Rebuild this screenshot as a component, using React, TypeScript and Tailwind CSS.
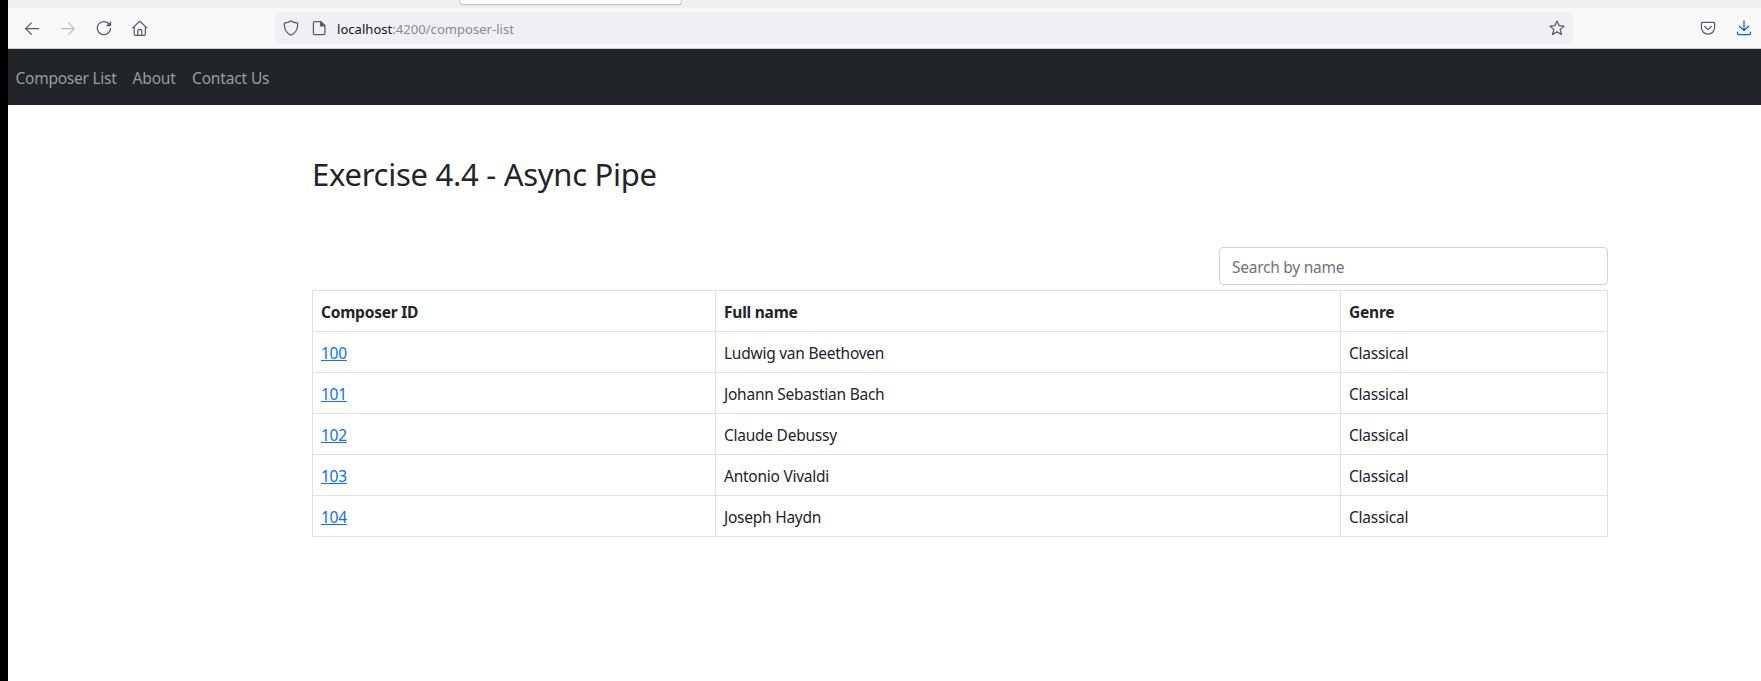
import type { ReactNode } from "react";

const composers = [
  { id: 100, name: "Ludwig van Beethoven", genre: "Classical" },
  { id: 101, name: "Johann Sebastian Bach", genre: "Classical" },
  { id: 102, name: "Claude Debussy", genre: "Classical" },
  { id: 103, name: "Antonio Vivaldi", genre: "Classical" },
  { id: 104, name: "Joseph Haydn", genre: "Classical" },
];

function Icon({ children, className = "text-[#5b5b66]" }: { children: ReactNode; className?: string }) {
  return (
    <svg
      viewBox="0 0 16 16"
      className={`size-4 shrink-0 ${className}`}
      fill="none"
      stroke="currentColor"
      strokeWidth="1.25"
      strokeLinecap="round"
      strokeLinejoin="round"
    >
      {children}
    </svg>
  );
}

function ToolButton({ label, children }: { label: string; children: ReactNode }) {
  return (
    <button aria-label={label} className="flex h-8 w-9 shrink-0 items-center justify-center">
      {children}
    </button>
  );
}

function BrowserToolbar() {
  return (
    <div className="flex h-[41px] items-center border-b border-[#cccdd0] bg-[#f9f9fb] pl-1.5">
      <ToolButton label="Back">
        <Icon>
          <path d="M14.6 8.6H1.6M7.3 2.9 1.6 8.6l5.7 5.7" />
        </Icon>
      </ToolButton>
      <ToolButton label="Forward">
        <Icon className="text-[#bdbdc2]">
          <path d="M1.4 8.6h13M8.7 2.9l5.7 5.7-5.7 5.7" />
        </Icon>
      </ToolButton>
      <ToolButton label="Reload">
        <Icon>
          <path d="M13.3 4.3A6.6 6.6 0 1 0 14.5 8.4" />
          <path d="M14.9 1.4v4.600h-4.600z" fill="currentColor" strokeWidth="0.4" />
        </Icon>
      </ToolButton>
      <ToolButton label="Home">
        <Icon>
          <path d="M.8 7.9 7.1 1.8a1 1 0 0 1 1.4 0l6.3 6.1M2.2 6.8v7.1c0 .8.5 1.4 1.3 1.4h8.6c.8 0 1.3-.6 1.3-1.4V6.8" />
          <path d="M5.8 15.1v-4.2c0-.7.5-1.2 1.2-1.2h1.6c.7 0 1.2.5 1.2 1.2v4.2" />
        </Icon>
      </ToolButton>

      <div className="ml-[117px] flex h-8 w-[1298px] shrink-0 items-center rounded bg-[#f0eff4] pr-2 pl-2">
        <Icon>
          <path d="M8 .8C6.3 2.2 3.6 3 1.3 3.2c-.2 5.2 1.3 9.6 6.700 12 5.400-2.400 6.900-6.800 6.700-12C12.400 3 9.700 2.200 8 .8Z" />
        </Icon>
        <Icon className="ml-3 text-[#5b5b66]">
          <path d="M3.800 1.600h6l4.100 4.100v7.500c0 .8-.6 1.400-1.400 1.400H3.800c-.8 0-1.400-.6-1.400-1.400V3c0-.8.6-1.400 1.400-1.400Z" />
          <path d="M9.600 1.700v4.100h4.200z" fill="currentColor" />
        </Icon>
        <div className="ml-2.5 grow pt-px text-[13px] leading-5 tracking-[0.04px] text-[#8a8a90]">
          <span className="text-[#15141a]">localhost</span>:4200/composer-list
        </div>
        <Icon>
          <path d="m8 1.100 2 4.500 5 .5-3.800 3.300 1.200 5.100L8 11.900l-4.400 2.600 1.200-5.100L1 6.100l5-.5z" />
        </Icon>
      </div>

      <div className="ml-auto flex">
        <ToolButton label="Save to Pocket">
          <Icon>
            <path d="M2.600 2.400h10.800c.7 0 1.200.5 1.200 1.200v4A6.600 6.600 0 0 1 1.400 7.600v-4c0-.7.5-1.200 1.200-1.200Z" />
            <path d="M4.600 6.400 8 9.600l3.400-3.200" />
          </Icon>
        </ToolButton>
        <button aria-label="Downloads" className="flex h-8 w-[35px] items-center justify-center">
          <Icon className="text-[#0061e0]">
            <path d="M8 .8v9.600M3.400 6.200 8 10.600l4.600-4.400M1.500 12v1.200c0 .8.500 1.300 1.300 1.300h10.400c.8 0 1.300-.5 1.300-1.300V12" />
          </Icon>
        </button>
      </div>
    </div>
  );
}

function NavBar() {
  return (
    <nav className="flex h-14 items-center gap-4 bg-[#212529] pt-0.5 pl-[7.5px] leading-6 text-[#9b9d9f]">
      <a href="#list" className="w-[101px] whitespace-nowrap">Composer List</a>
      <a href="#about" className="w-[43.5px] whitespace-nowrap tracking-[-0.15px]">About</a>
      <a href="#contact" className="whitespace-nowrap tracking-[-0.15px]">Contact Us</a>
    </nav>
  );
}

export default function App() {
  return (
    <div className="h-[681px] overflow-hidden border-l-8 border-black bg-white font-['Noto_Sans',sans-serif] text-[15.5px] tracking-[-0.25px] text-[#212529]">
      <div className="h-2 bg-[#f0f0f0] pl-[451px]">
        <div className="h-[5px] w-[223px] rounded-b border border-t-0 border-[#c5c5d0] bg-white shadow-xs" />
      </div>
      <BrowserToolbar />
      <NavBar />

      <main className="ml-[304px] w-[1296px] pt-[50px]">
        <h2 className="text-[31px] leading-[38px] tracking-[-0.28px]">Exercise 4.4 - Async Pipe</h2>

        <div className="mt-[54px] flex justify-end">
          <input
            type="text"
            placeholder="Search by name"
            className="h-[38px] w-[389px] rounded border border-[#ced4da] bg-white px-3 pt-[7px] pb-[5px] leading-6 placeholder:text-[#6c757d]"
          />
        </div>

        <table className="mt-[5px] w-full table-fixed border-collapse leading-6">
          <colgroup>
            <col className="w-[403px]" />
            <col className="w-[625px]" />
            <col />
          </colgroup>
          <thead>
            <tr>
              {["Composer ID", "Full name", "Genre"].map((title) => (
                <th
                  key={title}
                  className="border border-[#dee2e6] px-2 pt-[9px] pb-[7px] text-left font-bold tracking-[-0.22px]"
                >
                  {title}
                </th>
              ))}
            </tr>
          </thead>
          <tbody>
            {composers.map(({ id, name, genre }) => (
              <tr key={id}>
                <td className="border border-[#dee2e6] px-2 pt-[9px] pb-[7px]">
                  <a href={`#${id}`} className="text-[#0d6efd] underline decoration-1 underline-offset-1">
                    {id}
                  </a>
                </td>
                <td className="border border-[#dee2e6] px-2 pt-[9px] pb-[7px]">{name}</td>
                <td className="border border-[#dee2e6] px-2 pt-[9px] pb-[7px]">{genre}</td>
              </tr>
            ))}
          </tbody>
        </table>
      </main>
    </div>
  );
}
